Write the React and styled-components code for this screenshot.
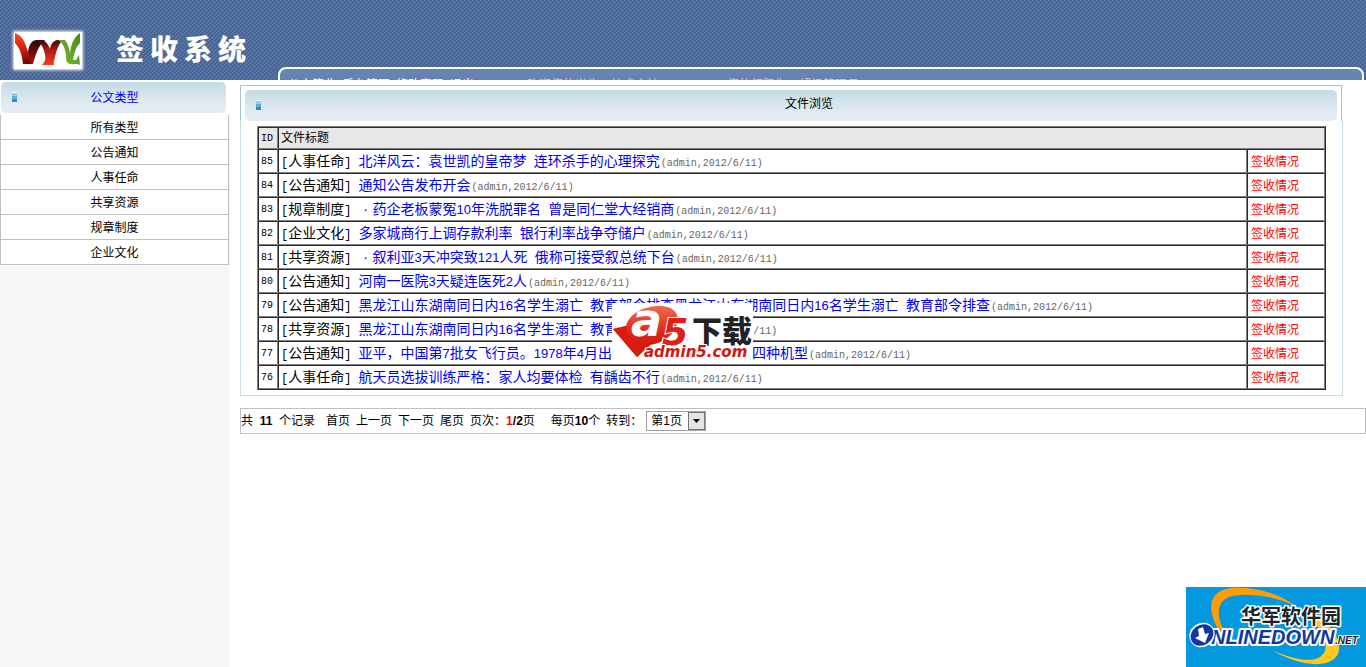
import React from 'react';
import styled, { createGlobalStyle, css } from 'styled-components';

const Global = createGlobalStyle`
  * { box-sizing: border-box; }
  html, body { margin: 0; background: #fff; }
  body { font: 12px/16px "Liberation Sans", "Noto Sans CJK SC", sans-serif; color: #000; }
  a { color: inherit; text-decoration: none; }
`;

const Page = styled.div`
  min-height: 100vh;
  display: flex;
  flex-direction: column;
`;

const Header = styled.header`
  height: 80px;
  overflow: hidden;
  display: flex;
  background: linear-gradient(135deg, #5876a5 25%, #48628f 25% 50%, #5876a5 50% 75%, #48628f 75%) 0 0 / 4px 4px;
`;

const Brand = styled.div`
  flex: 0 0 278px;
  display: flex;
  align-items: flex-start;
  padding: 27px 0 0 9px;
  gap: 29px;
`;

const SiteName = styled.h1`
  margin: 6px 0 0;
  font: 900 28px/36px "Liberation Serif", "Noto Sans CJK SC", sans-serif;
  color: #fff;
  display: flex;
  gap: 6px;
`;

const TopNav = styled.nav`
  flex: 1;
  height: 40px;
  margin: 67px 2px 0 0;
  padding: 8px 8px 0;
  display: flex;
  border: 2px solid #fff;
  border-radius: 8px;
  background: linear-gradient(#6884b2, #607dab);
  color: #fff;
  white-space: nowrap;
`;

const NavLinks = styled.div`
  display: flex;
  gap: 6px;
  width: 239px;
`;

const NavNote = styled.span`
  color: #ccc;
  width: 200px;
`;

const Body = styled.div`
  flex: 1;
  display: flex;
`;

const Sidebar = styled.aside`
  flex: 0 0 230px;
  background: #f7f7f7;
`;

const SideTop = styled.div`
  background: #fff;
  padding: 2px 4px 2px 1px;
`;

const TitleBar = styled.div`
  position: relative;
  height: 31px;
  display: flex;
  align-items: center;
  justify-content: center;
  border-radius: 5px;
  background: linear-gradient(#c5d9e6, #d8e7ec 50%, #e3ebf3 75%, #e3ebf3);
  color: ${p => p.$color || '#000'};
  padding-bottom: ${p => p.$lift || 0}px;
  padding-left: ${p => p.$indent || 0}px;
`;

const Marker = styled.i`
  position: absolute;
  left: 11px;
  top: 10px;
  width: 5px;
  height: 10px;
  background: linear-gradient(#fff 0 1px, #8fd0fa 1px 4px, #5eaee2 4px 7px, #4787b4 7px);
`;

const SideList = styled.ul`
  list-style: none;
  margin: 0 1px 0 0;
  padding: 0;
  background: #fff;
  border: solid #c0c0c0;
  border-width: 0 1px;
`;

const SideItem = styled.li`
  height: 25px;
  border-bottom: 1px solid #c0c0c0;
  text-align: center;
  line-height: 26px;
`;

const Main = styled.main`
  flex: 1;
  min-width: 0;
  padding: 5px 0 0 10px;
`;

const Panel = styled.section`
  position: relative;
  margin-right: 23px;
`;

const PanelHead = styled.div`
  margin-right: 1px;
  padding: 4px 4px 0;
  border: 1px solid #a4c3d5;
  border-bottom: 0;
`;

const PanelBody = styled.div`
  padding: 5px 16px;
  border: 1px solid #c9dfe9;
  border-top: 0;
`;

const Files = styled.table`
  width: 100%;
  table-layout: fixed;
  border-collapse: separate;
  border-spacing: 0;
  border: 1px solid;
  border-color: #808080 #2a2a2a #2a2a2a #808080;
`;

const cell = css`
  border: 1px solid;
  border-color: #2a2a2a #808080 #808080 #2a2a2a;
  padding: 0 2px;
  height: 24px;
  text-align: left;
  font-weight: normal;
  white-space: nowrap;
  overflow: hidden;
`;

const Th = styled.th`
  ${cell}
  height: 22px;
  line-height: 18px;
  background: #e8e6e7;
`;

const Td = styled.td`${cell}`;

const IdCol = styled.col`width: 20px;`;
const StatusCol = styled.col`width: 78px;`;

const Mono = styled.span`
  font-family: "Liberation Mono", monospace;
  font-size: ${p => p.$size}px;
  white-space: pre;
`;

const Digits = styled.span`
  font-size: 13px;
`;

const FileLine = styled.div`
  font-size: 14px;
  height: 22px;
  line-height: 22px;
`;

const FileLink = styled.a`color: #0000f0 !important;`;
const Dot = styled.span`
  display: inline-block;
  width: 14px;
  height: 20px;
  vertical-align: top;
  text-align: center;
`;

const Meta = styled(Mono)`
  color: #666;
  padding-left: 1px;
`;

const StatusLink = styled.a`
  display: block;
  height: 22px;
  line-height: 24px;
  padding-left: 1px;
  color: #f00 !important;
`;

const Pager = styled.div`
  height: 26px;
  margin-top: 12px;
  border: 1px solid #c0c0c0;
  display: flex;
  align-items: center;
  white-space: pre;
  gap: 6px;
`;

const Count = styled.span`margin-right: ${p => p.$gap || 0}px;`;
const Current = styled.b`color: #f00;`;

const PageSelect = styled.select`
  appearance: none;
  width: 60px;
  height: 20px;
  margin-left: 4px;
  padding: 0 4px;
  border: 1px solid #a0a0a8;
  border-radius: 0;
  font: inherit;
  color: #000;
  background: #fff;
`;

const SelectWrap = styled.label`
  position: relative;
  display: flex;
  align-items: center;
`;

const Arrow = styled.svg`
  position: absolute;
  right: 0;
  top: 1px;
  pointer-events: none;
`;

const DownloadMark = styled.svg`
  position: absolute;
  left: 372px;
  top: 218px;
`;

const SiteMark = styled.svg`
  position: fixed;
  right: 0;
  bottom: 0;
`;

const categories = ['所有类型', '公告通知', '人事任命', '共享资源', '规章制度', '企业文化'];

const files = [
  [85, '人事任命', '北洋风云：袁世凯的皇帝梦 连环杀手的心理探究'],
  [84, '公告通知', '通知公告发布开会'],
  [83, '规章制度', '·药企老板蒙冤10年洗脱罪名 曾是同仁堂大经销商'],
  [82, '企业文化', '多家城商行上调存款利率 银行利率战争夺储户'],
  [81, '共享资源', '·叙利亚3天冲突致121人死 俄称可接受叙总统下台'],
  [80, '公告通知', '河南一医院3天疑连医死2人'],
  [79, '公告通知', '黑龙江山东湖南同日内16名学生溺亡 教育部令排查黑龙江山东湖南同日内16名学生溺亡 教育部令排查'],
  [78, '共享资源', '黑龙江山东湖南同日内16名学生溺亡 教育部令排查'],
  [77, '公告通知', '亚平，中国第7批女飞行员。1978年4月出生，山东烟台人，能飞四种机型'],
  [76, '人事任命', '航天员选拔训练严格：家人均要体检 有龋齿不行'],
];

function Title({ text }) {
  return text.split(/([0-9]+|[ ·])/).map((part, i) => {
    if (part === '·') return <Dot key={i}>·</Dot>;
    if (part === ' ') return <Mono key={i} $size={12}> </Mono>;
    return i % 2 ? <Digits key={i}>{part}</Digits> : part;
  });
}

function Logo() {
  return (
    <svg width="78" height="47" viewBox="0 0 78 47" aria-label="YYY">
      <defs>
        <filter id="glow" x="-10%" y="-15%" width="120%" height="130%"><feGaussianBlur stdDeviation="1.5" /></filter>
        <linearGradient id="red" x1="0" y1="0" x2="0" y2="1">
          <stop offset="0" stopColor="#f8501c" /><stop offset=".5" stopColor="#d02010" /><stop offset="1" stopColor="#6c0806" />
        </linearGradient>
        <linearGradient id="dark" x1="0" y1="0" x2="0" y2="1">
          <stop offset="0" stopColor="#240202" /><stop offset="1" stopColor="#b4180e" />
        </linearGradient>
        <linearGradient id="cross" x1="0" y1="0" x2="0" y2="1">
          <stop offset="0" stopColor="#400404" /><stop offset=".4" stopColor="#b01a10" /><stop offset="1" stopColor="#f43c20" />
        </linearGradient>
        <linearGradient id="green" x1="1" y1="0" x2="0" y2="1">
          <stop offset="0" stopColor="#4c8a20" /><stop offset="1" stopColor="#7cba2c" />
        </linearGradient>
      </defs>
      <rect x="4" y="4" width="70" height="39" fill="#fff" filter="url(#glow)" />
      <rect x="5" y="5" width="68" height="37" fill="#fff" />
      <path d="M19 25c1-8 4-12 9-12h8c-6 5-9 13-12 24H15z" fill="url(#dark)" />
      <path d="M6 6c6 2 9 7 11 13l6 18h-9c-1-9-3-16-8-21z" fill="url(#red)" />
      <path d="M40 26c1-8 4-13 9-13h5c-6 5-7 14-10 25H34z" fill="url(#cross)" />
      <path d="M27 13h7c5 3 7 8 8 13l3 12H33c3-3 4-6 3-10-1-7-4-12-9-15z" fill="url(#cross)" />
      <path d="M49 13h7c3 4 4 8 5 13 1-9 4-16 10-20v10c-5 5-6 12-7 17h3l3-5 1 10c-3-2-6 0-10-1s-4-5-4-9c-1-7-3-12-8-15z" fill="url(#green)" />
    </svg>
  );
}

export default function App() {
  return (
    <Page>
      <Global />
      <Header>
        <Brand>
          <Logo />
          <SiteName><span>签</span><span>收</span><span>系</span><span>统</span></SiteName>
        </Brand>
        <TopNav>
          <NavLinks>
            <a href="#sign">公文签收</a><a href="#admin">后台管理</a><a href="#password">修改密码</a><a href="#exit">退出</a>
          </NavLinks>
          <NavNote>欢迎您的光临：技术支持</NavNote>
          <NavNote>您的权限为：超级管理员</NavNote>
        </TopNav>
      </Header>
      <Body>
        <Sidebar>
          <SideTop>
            <TitleBar $color="#00f" $indent={2}><Marker />公文类型</TitleBar>
          </SideTop>
          <SideList>
            {categories.map(c => <SideItem key={c}><a href="#list">{c}</a></SideItem>)}
          </SideList>
        </Sidebar>
        <Main>
          <Panel>
            <PanelHead><TitleBar $lift={4} $indent={36}><Marker />文件浏览</TitleBar></PanelHead>
            <PanelBody>
              <Files>
                <colgroup><IdCol /><col /><StatusCol /></colgroup>
                <thead>
                  <tr><Th><Mono $size={10}>ID</Mono></Th><Th colSpan={2}>文件标题</Th></tr>
                </thead>
                <tbody>
                  {files.map(([id, type, title]) => (
                    <tr key={id}>
                      <Td><Mono $size={10}>{id}</Mono></Td>
                      <Td>
                        <FileLine>
                          <Mono $size={12}>[</Mono>{type}<Mono $size={12}>] </Mono>
                          <FileLink href="#file"><Title text={title} /></FileLink>
                          <Meta $size={10}>(admin,2012/6/11)</Meta>
                        </FileLine>
                      </Td>
                      <Td><StatusLink href="#status">签收情况</StatusLink></Td>
                    </tr>
                  ))}
                </tbody>
              </Files>
            </PanelBody>
            <DownloadMark width="141" height="58" viewBox="0 0 141 58" aria-label="a5下载">
              <defs>
                <linearGradient id="badge" x1="0" y1="0" x2="0" y2="1">
                  <stop offset="0" stopColor="#f06a50" /><stop offset=".5" stopColor="#e02818" /><stop offset="1" stopColor="#c01008" />
                </linearGradient>
              </defs>
              <rect width="141" height="58" fill="#fff" />
              <path d="M1 26l13-3C17 10 34 2 50 3c12 1 18 8 15 18-3 11-14 19-27 21L25 54z" fill="url(#badge)" />
              <path d="M1 26l13-3c1 11 10 18 24 19L25 54z" fill="#d81c10" />
              <text x="19" y="33" fontFamily="DejaVu Sans, sans-serif" fontSize="46" fontWeight="700" fontStyle="italic" fill="#fff">a</text>
              <text x="50" y="42" fontFamily="DejaVu Sans, sans-serif" fontSize="38" fontWeight="700" fontStyle="italic" fill="#dc2218" stroke="#fff" strokeWidth="2" paintOrder="stroke">5</text>
              <text x="80" y="39" fontFamily="Noto Sans CJK SC, sans-serif" fontSize="30" fontWeight="900" fill="#222">下载</text>
              <text x="32" y="54" fontFamily="DejaVu Sans, sans-serif" fontSize="15" fontWeight="700" fontStyle="italic" fill="#d01810" stroke="#fff" strokeWidth="2" paintOrder="stroke">admin5.com</text>
            </DownloadMark>
          </Panel>
          <Pager>
            <Count $gap={5}>共  <b>11</b>  个记录</Count>
            <a href="#first">首页</a><a href="#prev">上一页</a><a href="#next">下一页</a><a href="#last">尾页</a>
            <Count $gap={10}>页次：<Current>1</Current><b>/2</b>页</Count>
            <span>每页<b>10</b>个</span>
            <SelectWrap>转到：
              <PageSelect defaultValue="1"><option value="1">第1页</option><option value="2">第2页</option></PageSelect>
              <Arrow width="18" height="18" viewBox="0 0 18 18">
                <rect x=".5" y=".5" width="16" height="17" fill="#e4e4e4" stroke="#777" />
                <path d="M5 7h7l-3.500 4z" fill="#000" />
              </Arrow>
            </SelectWrap>
          </Pager>
        </Main>
      </Body>
      <SiteMark width="180" height="80" viewBox="0 0 180 80" aria-label="华军软件园 ONLINEDOWN.NET">
        <rect width="180" height="80" fill="#0499de" />
        <path d="M32 42C21 22 22 4 45 1c24-2 50 6 66 19C91 10 70 7 54 8 33 9 28 22 37 42z" fill="#ff9c08" />
        <path d="M130 27c22 16 34 42 10 49-16 4-38-3-54-13 19 9 39 13 48 7 12-8 4-27-14-43z" fill="#ffc820" />
        <g fontWeight="700" paintOrder="stroke" stroke="#fff" strokeLinejoin="round">
          <text x="55" y="37" fontFamily="Noto Sans CJK SC, sans-serif" fontSize="20" strokeWidth="3" fill="#202428">华军软件园</text>
          <text x="25" y="57" fontFamily="Liberation Sans, sans-serif" fontSize="20" fontStyle="italic" strokeWidth="4" fill="#1238a0">NLINEDOWN</text>
          <text x="149" y="57" fontFamily="Liberation Sans, sans-serif" fontSize="10" fontStyle="italic" strokeWidth="2" fill="#202428">.NET</text>
        </g>
        <ellipse cx="16" cy="48" rx="13" ry="12" fill="#fff" transform="rotate(-35 16 48)" />
        <ellipse cx="16" cy="48" rx="12" ry="10" fill="#1238a0" transform="rotate(-35 16 48)" />
        <path d="M12 42l5-2 2 7 4-1-4 10-10-5 4-2z" fill="#fff" />
      </SiteMark>
    </Page>
  );
}
